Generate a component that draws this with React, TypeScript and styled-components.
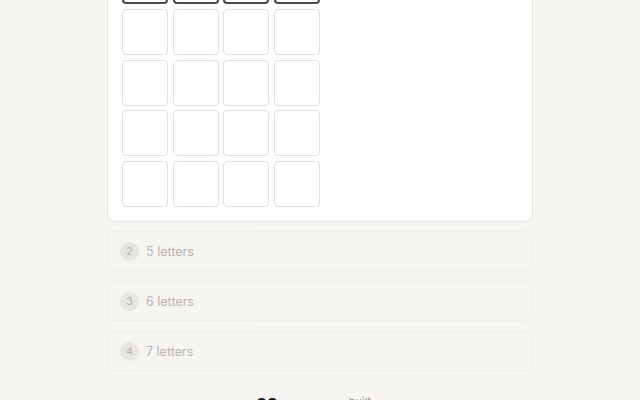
import { useLayoutEffect, useRef } from "react";
import styled, { createGlobalStyle } from "styled-components";

const GlobalStyle = createGlobalStyle`
  html, body {
    margin: 0;
    padding: 0;
    background: #f6f5f1;
    font-family: Inter, "Noto Sans", "Liberation Sans", sans-serif;
    color: #222;
  }
  * { box-sizing: border-box; }
`;

const rounds = [
  { id: 1, length: 4 },
  { id: 2, length: 5 },
  { id: 3, length: 6 },
  { id: 4, length: 7 },
];

const GUESSES = 5;

const Viewport = styled.div`
  height: 100vh;
  overflow: hidden;
`;

const Page = styled.main`
  width: 426px;
  margin: 0 auto;
  padding: 24px 0 60px;
  display: flex;
  flex-direction: column;
  gap: 10px;
`;

const Header = styled.header`
  display: flex;
  flex-direction: column;
  align-items: center;
  gap: 6px;
  padding: 10px 0 14px;

  h1 {
    margin: 0;
    font-size: 22px;
    font-weight: 700;
    letter-spacing: -0.3px;
  }

  p {
    margin: 0;
    font-size: 13px;
    color: #8a8780;
  }
`;

const Card = styled.section`
  background: #fff;
  border: 1px solid #e6e3dd;
  border-radius: 8px;
  padding: 14px;
  margin-bottom: -1px;
`;

const RoundHead = styled.div`
  display: flex;
  align-items: center;
  gap: 8px;
  margin-bottom: 14px;
  font-size: 13px;
  color: #333;
`;

const Badge = styled.span<{ $active?: boolean }>`
  width: 19px;
  height: 19px;
  border-radius: 50%;
  display: inline-flex;
  align-items: center;
  justify-content: center;
  font-size: 10.5px;
  font-weight: 500;
  background: ${(p) => (p.$active ? "#222" : "#dfddd8")};
  color: ${(p) => (p.$active ? "#fff" : "#8f8c86")};
`;

const Grid = styled.div<{ $cols: number }>`
  display: grid;
  grid-template-columns: repeat(${(p) => p.$cols}, 46px);
  grid-auto-rows: 46px;
  column-gap: 4.7px;
  row-gap: 4.8px;
`;

const Tile = styled.div<{ $current?: boolean }>`
  border-radius: 4px;
  border: ${(p) => (p.$current ? "2px solid #4a4a4a" : "1px solid #e0dfdc")};
  background: #fff;
`;

const Collapsed = styled.div`
  height: 40px;
  border: 1px solid #ece9e4;
  border-radius: 8px;
  display: flex;
  align-items: center;
  gap: 7px;
  padding: 0 12px;
  opacity: 0.6;
  font-size: 12.5px;
  color: #8e8b86;
`;

const Stats = styled.div`
  display: flex;
  justify-content: center;
  gap: 33px;
  margin-top: 14px;
  padding-right: 13px;
`;

const Stat = styled.div`
  width: 60px;
  display: flex;
  flex-direction: column;
  align-items: center;
  gap: 2px;

  strong {
    font-size: 17px;
    font-weight: 700;
    color: #1c1c1c;
  }

  span {
    font-size: 11px;
    color: #9b9892;
  }
`;

export default function App() {
  const viewRef = useRef<HTMLDivElement>(null);
  const gridRef = useRef<HTMLDivElement>(null);

  // open the page on the active board, current row just above the fold
  useLayoutEffect(() => {
    const view = viewRef.current;
    const grid = gridRef.current;
    if (!view || !grid) return;
    view.scrollTop = grid.offsetTop + 46 - 4;
  }, []);

  const [active, ...rest] = rounds;

  return (
    <Viewport ref={viewRef}>
      <GlobalStyle />
      <Page>
        <Header>
          <h1>Ladder</h1>
          <p>Four words, growing one letter at a time</p>
        </Header>
        <Card>
          <RoundHead>
            <Badge $active>{active.id}</Badge>
            {active.length} letters
          </RoundHead>
          <Grid ref={gridRef} $cols={active.length} style={{ position: "relative" }}>
            {Array.from({ length: GUESSES * active.length }, (_, i) => (
              <Tile key={i} $current={i < active.length} />
            ))}
          </Grid>
        </Card>
        {rest.map((r) => (
          <Collapsed key={r.id}>
            <Badge>{r.id}</Badge>
            {r.length} letters
          </Collapsed>
        ))}
        <Stats>
          <Stat>
            <strong>22</strong>
            <span>guesses</span>
          </Stat>
          <Stat>
            <span>built</span>
            <strong>—</strong>
          </Stat>
        </Stats>
      </Page>
    </Viewport>
  );
}
